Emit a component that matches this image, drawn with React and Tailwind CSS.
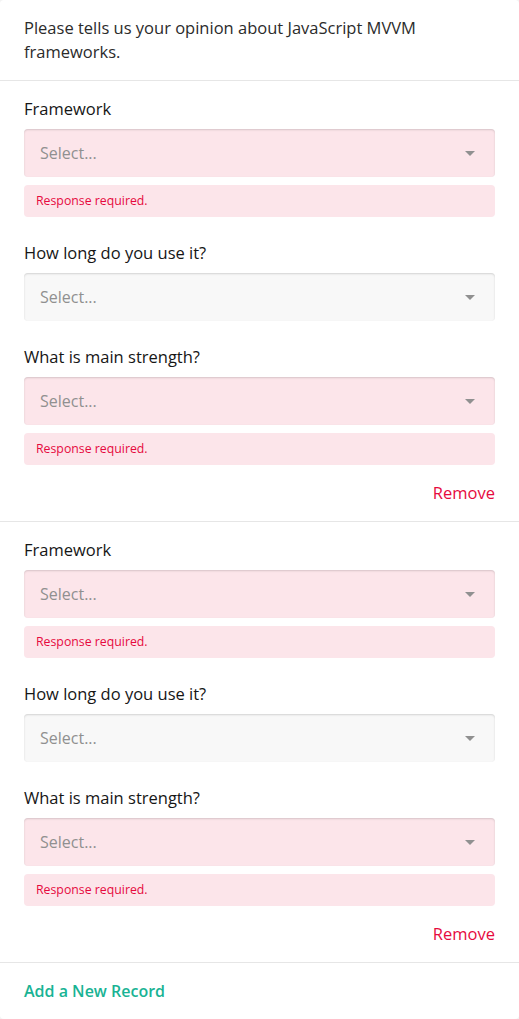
const questions = [
  { title: 'Framework', required: true },
  { title: 'How long do you use it?', required: false },
  { title: 'What is main strength?', required: true },
];

function SelectBox({ error }) {
  return (
    <div
      className={`flex h-12 items-center justify-between rounded-[4px] px-4 shadow-[inset_0_1px_2px_rgba(0,0,0,0.15)] ${
        error ? 'bg-[#fce5ea]' : 'bg-[#f8f8f8]'
      }`}
    >
      <span className="text-base text-[#909090]">Select...</span>
      <svg width="10" height="5" viewBox="0 0 10 5" className="mr-[4px]">
        <path d="M0 0 L10 0 L5 5 Z" fill="#909090" />
      </svg>
    </div>
  );
}

function Question({ title, required }) {
  return (
    <div className="flex flex-col gap-2">
      <div className="text-[16.5px] leading-6 text-[#161616]">{title}</div>
      <SelectBox error={required} />
      {required && (
        <div className="flex h-8 items-center rounded-[4px] bg-[#fce5ea] px-3 text-[12.3px] text-[#e60a3e]">
          Response required.
        </div>
      )}
    </div>
  );
}

function Panel() {
  return (
    <div className="flex flex-col border-b border-[#e6e6e6] px-6 pt-4 pb-4">
      <div className="flex flex-col gap-6">
        {questions.map((q) => (
          <Question key={q.title} title={q.title} required={q.required} />
        ))}
      </div>
      <div className="mt-4 flex justify-end">
        <button className="text-[16.5px] leading-6 text-[#e60a3e]">Remove</button>
      </div>
    </div>
  );
}

export default function App() {
  return (
    <div className="min-h-screen bg-[#f3f3f3] font-['Open_Sans',sans-serif]">
      <div className="rounded-[4px] bg-white">
        <div className="border-b border-[#e6e6e6] px-6 pt-4 pb-4 text-[16.5px] leading-6 text-[#2b2b2b]">
          Please tells us your opinion about JavaScript MVVM frameworks.
        </div>
        <Panel />
        <Panel />
        <div className="px-6 py-4">
          <button className="text-base leading-6 font-semibold text-[#19b394]">Add a New Record</button>
        </div>
      </div>
    </div>
  );
}
